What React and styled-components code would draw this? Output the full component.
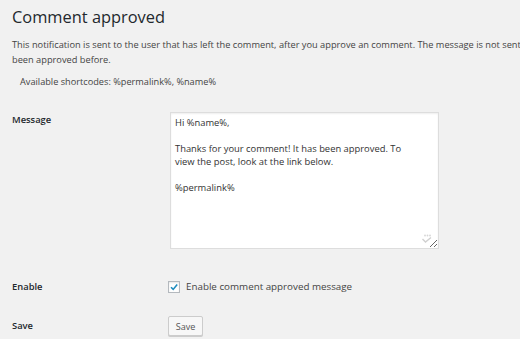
import React from "react";
import styled, { createGlobalStyle } from "styled-components";

const Global = createGlobalStyle`
  html, body { margin: 0; padding: 0; background: #f1f1f1; overflow: hidden; }
  body { font-family: "Open Sans", "Noto Sans", sans-serif; color: #444; }
`;

const Page = styled.div`
  width: 520px;
  height: 339px;
  padding-left: 12px;
  box-sizing: border-box;
  overflow: hidden;
`;

const Title = styled.h2`
  margin: 6px 0 0;
  font-size: 16.4px;
  line-height: 22px;
  font-weight: 400;
  color: #23282d;
`;

const Description = styled.p`
  margin: 9px 0 0;
  font-size: 9.25px;
  line-height: 15px;
  color: #444;
  white-space: nowrap;
`;

const Shortcodes = styled.p`
  margin: 7px 0 0 8px;
  font-size: 9.2px;
  line-height: 15px;
  color: #444;
`;

const Row = styled.div`
  display: flex;
  align-items: flex-start;
  margin-top: ${(p) => p.$gap}px;
`;

const Label = styled.div`
  width: 156px;
  flex: none;
  font-size: 9.4px;
  line-height: 15px;
  font-weight: 600;
  color: #23282d;
  padding-top: ${(p) => p.$offset || 0}px;
`;

const Field = styled.div`
  display: flex;
  align-items: center;
  gap: 6px;
`;

const AreaWrap = styled.div`
  position: relative;
  margin-left: 2px;
  line-height: 0;
`;

const TextArea = styled.textarea`
  width: 269px;
  height: 137px;
  box-sizing: border-box;
  margin: 0;
  padding: 3px 26px 1px 4px;
  border: 1px solid #dddddd;
  box-shadow: inset 0 1px 2px rgba(0, 0, 0, 0.07);
  background: #fff;
  font-family: "Open Sans", "Noto Sans", sans-serif;
  font-size: 9.4px;
  line-height: 13px;
  color: #333;
  outline: none;
`;

const Badge = styled.svg`
  position: absolute;
  right: 6px;
  bottom: 5px;
  pointer-events: none;
`;

const Check = styled.span`
  width: 12px;
  height: 12px;
  box-sizing: border-box;
  border: 1px solid #b4b9be;
  background: #fff;
  box-shadow: inset 0 1px 2px rgba(0, 0, 0, 0.1);
  display: flex;
  align-items: center;
  justify-content: center;
`;

const CheckText = styled.span`
  font-size: 9.8px;
  line-height: 15px;
  color: #444;
`;

const Button = styled.button`
  width: 35px;
  height: 20px;
  padding: 0;
  box-sizing: border-box;
  border: 1px solid #cccccc;
  border-radius: 2px;
  background: #f7f7f7;
  box-shadow: 0 1px 0 #ccc;
  font-family: "Open Sans", "Noto Sans", sans-serif;
  font-size: 9.1px;
  color: #555;
`;

export default function App() {
  return (
    <>
      <Global />
      <Page>
        <Title>Comment approved</Title>
        <Description>
          This notification is sent to the user that has left the comment, after you approve an comment. The message is not sent
          <br />
          been approved before.
        </Description>
        <Shortcodes>Available shortcodes: %permalink%, %name%</Shortcodes>
        <Row $gap={23}>
          <Label>Message</Label>
          <AreaWrap>
            <TextArea
              defaultValue={"Hi %name%,\n\nThanks for your comment! It has been approved. To view the post, look at the link below.\n\n%permalink%"}
            />
            <Badge width="12" height="10" viewBox="0 0 12 10">
              <circle cx="4" cy="1.5" r="0.9" fill="#d6d6d6" />
              <circle cx="6.5" cy="1.5" r="0.9" fill="#d6d6d6" />
              <circle cx="9" cy="1.5" r="0.9" fill="#d6d6d6" />
              <path d="M1.5 5 L4.5 8 L10 3.5" fill="none" stroke="#d0d0d0" strokeWidth="1.4" />
            </Badge>
          </AreaWrap>
        </Row>
        <Row $gap={30}>
          <Label>Enable</Label>
          <Field>
            <Check>
              <svg width="10" height="10" viewBox="0 0 10 10">
                <path d="M2 5.2 L4.2 7.4 L8.2 2.4" fill="none" stroke="#1e8cbe" strokeWidth="1.6" />
              </svg>
            </Check>
            <CheckText>Enable comment approved message</CheckText>
          </Field>
        </Row>
        <Row $gap={22}>
          <Label $offset={2}>Save</Label>
          <Button>Save</Button>
        </Row>
      </Page>
    </>
  );
}
